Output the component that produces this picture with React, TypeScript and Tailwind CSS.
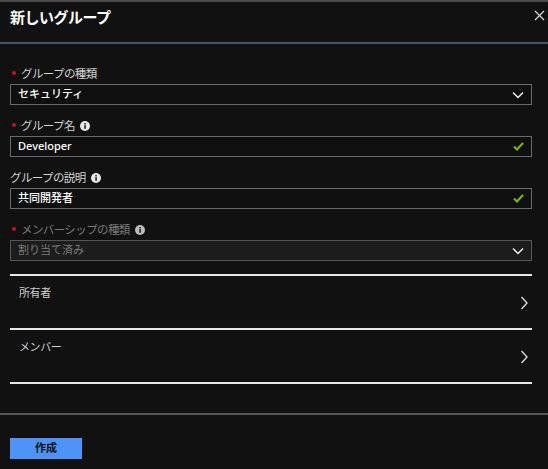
import React from "react";

const font = "font-['Noto_Sans','Noto_Sans_CJK_JP',sans-serif]";

// small white info circle next to labels
const InfoIcon: React.FC<{ dim?: boolean }> = ({ dim }) => (
  <svg width="10" height="10" viewBox="0 0 10 10" className="ml-[5px] inline-block">
    <circle cx="5" cy="5" r="5" fill={dim ? "#bdbdbd" : "#e8e8e8"} />
    <rect x="4.3" y="4.2" width="1.5" height="3.6" fill="#111" />
    <rect x="4.3" y="2.1" width="1.5" height="1.4" fill="#111" />
  </svg>
);

const ChevronDown = () => (
  <svg width="12" height="8" viewBox="0 0 12 8">
    <path d="M1 1.5 L6 6.5 L11 1.5" stroke="#f0f0f0" strokeWidth="1.5" fill="none" />
  </svg>
);

const Check = () => (
  <svg width="11" height="9" viewBox="0 0 11 9">
    <path d="M1 4.5 L4 7.5 L10 1" stroke="#7fba00" strokeWidth="2" fill="none" />
  </svg>
);

const ChevronRight = () => (
  <svg width="8" height="14" viewBox="0 0 8 14">
    <path d="M1.5 1 L7 7 L1.5 13" stroke="#d8d8d8" strokeWidth="1.4" fill="none" />
  </svg>
);

type FieldProps = {
  label: string;
  required?: boolean;
  info?: boolean;
  value: string;
  kind: "select" | "check";
  disabled?: boolean;
};

const Field: React.FC<FieldProps> = ({ label, required, info, value, kind, disabled }) => (
  <div className="flex flex-col">
    <div
      className={`flex items-center h-[14px] text-[11.5px] leading-[14px] tracking-[-0.6px] mb-[3px] ${
        disabled ? "text-[#7a7a7a]" : "text-[#d4d4d4]"
      }`}
    >
      {required ? (
        <span className="w-[4px] h-[4px] ml-[2px] mr-[5px] mb-[2px] rounded-full bg-[#d0102a]" />
      ) : null}
      <span>{label}</span>
      {info && <InfoIcon dim={disabled} />}
    </div>
    <div
      className={`h-[21px] flex items-center justify-between pl-[7px] pr-[7px] border ${
        disabled
          ? "bg-[#1c1c1c] border-[#555] text-[#7a7a7a] font-normal"
          : "bg-[#0f0f0f] border-[#6a6a6a] text-white font-medium"
      } text-[11px]`}
    >
      <span>{value}</span>
      {kind === "select" ? <ChevronDown /> : <Check />}
    </div>
  </div>
);

const LinkRow: React.FC<{ label: string }> = ({ label }) => (
  <div className="flex flex-col">
    <div className="h-[2px] bg-[#e6e6e6]" />
    <div className="h-[52px] flex justify-between pl-[9px] pr-[4px]">
      <span className="text-[11px] text-[#cfcfcf] pt-[9px] tracking-[-0.4px]">{label}</span>
      <div className="flex items-center pt-[2px]">
        <ChevronRight />
      </div>
    </div>
  </div>
);

const App: React.FC = () => {
  return (
    <div className={`w-[548px] h-[469px] bg-[#111111] flex flex-col ${font}`}>
      <div className="h-[2px] bg-[#4a4a4a]" />
      <div className="h-[40px] flex items-start justify-between pl-[10px] pr-[3px]">
        <h1 className="pt-[4px] text-[15px] leading-[22px] font-bold text-white tracking-[-0.5px]">
          新しいグループ
        </h1>
        <svg width="11" height="11" viewBox="0 0 11 11" className="mt-[8px]">
          <path d="M1 1 L10 10 M10 1 L1 10" stroke="#d8d8d8" strokeWidth="1.2" />
        </svg>
      </div>
      <div className="h-[2px] bg-[#3d5866]" />

      <div className="flex flex-col gap-[14px] pl-[10px] pr-[16px] pt-[23px]">
        <Field label="グループの種類" required value="セキュリティ" kind="select" />
        <Field label="グループ名" required info value="Developer" kind="check" />
        <Field label="グループの説明" info value="共同開発者" kind="check" />
        <Field label="メンバーシップの種類" required info value="割り当て済み" kind="select" disabled />
      </div>

      <div className="flex flex-col pl-[10px] pr-[16px] pt-[13px]">
        <LinkRow label="所有者" />
        <LinkRow label="メンバー" />
        <div className="h-[2px] bg-[#e6e6e6]" />
      </div>

      <div className="mt-[29px] h-[2px] bg-[#555555]" />

      <div className="pl-[10px] pt-[23px]">
        <button className="w-[72px] h-[21px] bg-[#4d93f8] text-[#111] text-[11px] font-bold flex items-center justify-center">
          作成
        </button>
      </div>
    </div>
  );
};

export default App;
